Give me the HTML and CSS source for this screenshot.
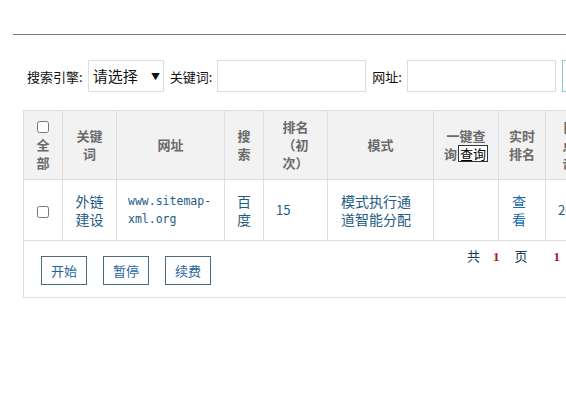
FILE: index.html
```html
<!DOCTYPE html>
<html lang="zh-CN">
<head>
  <meta charset="UTF-8" />
  <title>关键词排名</title>
  <link rel="stylesheet" href="styles.css">
</head>
<body>
  <div class="topline"></div>

  <form class="search">
    <label>搜索引擎:</label>
    <div class="select">请选择 <span class="arrow">▼</span></div>
    <label>关键词:</label>
    <input type="text" class="field" />
    <label>网址:</label>
    <input type="text" class="field" />
    <button type="button" class="go"></button>
  </form>

  <div class="panel">
    <table class="grid">
      <colgroup>
        <col style="width:39px"><col style="width:54px"><col style="width:108px"><col style="width:39px">
        <col style="width:64px"><col style="width:106px"><col style="width:65px"><col style="width:47px">
        <col style="width:47px"><col style="width:60px">
      </colgroup>
      <thead>
        <tr>
          <th><input type="checkbox" class="chk" /><br>全<br>部</th>
          <th>关键<br>词</th>
          <th>网址</th>
          <th>搜<br>索</th>
          <th>排名<br>（初<br>次）</th>
          <th>模式</th>
          <th>一键查<br>询<button type="button" class="mini">查询</button></th>
          <th>实时<br>排名</th>
          <th>日<br>点<br>击</th>
          <th></th>
        </tr>
      </thead>
      <tbody>
        <tr>
          <td><input type="checkbox" class="chk" /></td>
          <td>外链<br>建设</td>
          <td class="url">www.sitemap-<br>xml.org</td>
          <td>百<br>度</td>
          <td class="num">15</td>
          <td class="left">模式执行通<br>道智能分配</td>
          <td></td>
          <td class="see"><a href="#" class="link">查<br>看</a></td>
          <td class="num">20</td>
          <td></td>
        </tr>
      </tbody>
    </table>
    <div class="foot">
      <div class="actions">
        <button type="button" class="btn">开始</button>
        <button type="button" class="btn">暂停</button>
        <button type="button" class="btn">续费</button>
      </div>
      <div class="pager"><span>共</span><b class="n1">1</b><span class="p">页</span><b class="n2">1</b></div>
    </div>
  </div>
</body>
</html>
```

FILE: styles.css
```css
html, body { margin: 0; overflow: hidden; }
body { font-family: "Noto Sans CJK SC", "DejaVu Sans", sans-serif; font-size: 13px; color: #222; background: #fff; width: 566px; height: 397px; }

.topline { margin: 34px 0 0 13px; border-top: 1px solid #7a7a7a; }

.search { display: flex; align-items: center; margin: 25px 0 0 27px; width: 700px; height: 32px; }
.search label { font-size: 13px; color: #111; margin-right: 5px; }
.select { box-sizing: border-box; width: 76px; height: 32px; border: 1px solid #ddd; font-size: 15px; line-height: 30px; padding-left: 4px; margin-right: 6px; color: #111; }
.select .arrow { font-size: 9px; margin-left: 10px; vertical-align: 2px; }
.field { box-sizing: border-box; width: 149px; height: 32px; border: 1px solid #ddd; margin: 0 6px 0 0; padding: 0; }
.go { box-sizing: border-box; height: 32px; width: 60px; border: 1px solid #8cc; background: #fff; }

.panel { margin: 18px 0 0 23px; width: 640px; border: 1px solid #ddd; }
.grid { border-collapse: collapse; table-layout: fixed; width: 630px; margin: -1px 0 0 -1px; }
.grid th, .grid td { border: 1px solid #ddd; text-align: center; padding: 0; }
.grid th { background: #f2f2f2; color: #6a6a6a; font-weight: bold; line-height: 18px; height: 68px; font-size: 13px; }
.grid td { height: 60px; color: #1e5b86; line-height: 18px; font-size: 14px; }
.grid td.url { font-family: "DejaVu Sans Mono", monospace; font-size: 11.5px; text-align: left; padding-left: 11px; }
.grid td.num { text-align: left; padding-left: 12px; font-size: 13px; }
.grid td.left { text-align: left; padding-left: 13px; }
.grid td.see { padding-right: 6px; }
.link { color: #1a6bb0; text-decoration: none; }
.chk { width: 12px; height: 12px; margin: 0; vertical-align: middle; }
th .chk { margin-bottom: 2px; }
.mini { font-family: inherit; font-size: 13px; font-weight: normal; color: #000; background: #fff; border: 1px solid #333; padding: 0 1px; line-height: 15px; margin-left: 1px; }

.foot { display: flex; height: 56px; }
.actions { display: flex; gap: 16px; padding: 15px 0 0 17px; align-items: flex-start; }
.btn { box-sizing: border-box; width: 46px; height: 29px; border: 1px solid #4d6c82; background: #fff; color: #1e66a0; font-family: inherit; font-size: 13px; padding: 0; }
.pager { display: flex; align-items: baseline; margin: 5px 0 0 256px; color: #1e3a52; font-size: 13px; }
.pager b { color: #b0102a; font-family: "Liberation Serif", serif; }
.pager .n1 { margin-left: 13px; }
.pager .p { margin-left: 15px; }
.pager .n2 { margin-left: 26px; }
```
